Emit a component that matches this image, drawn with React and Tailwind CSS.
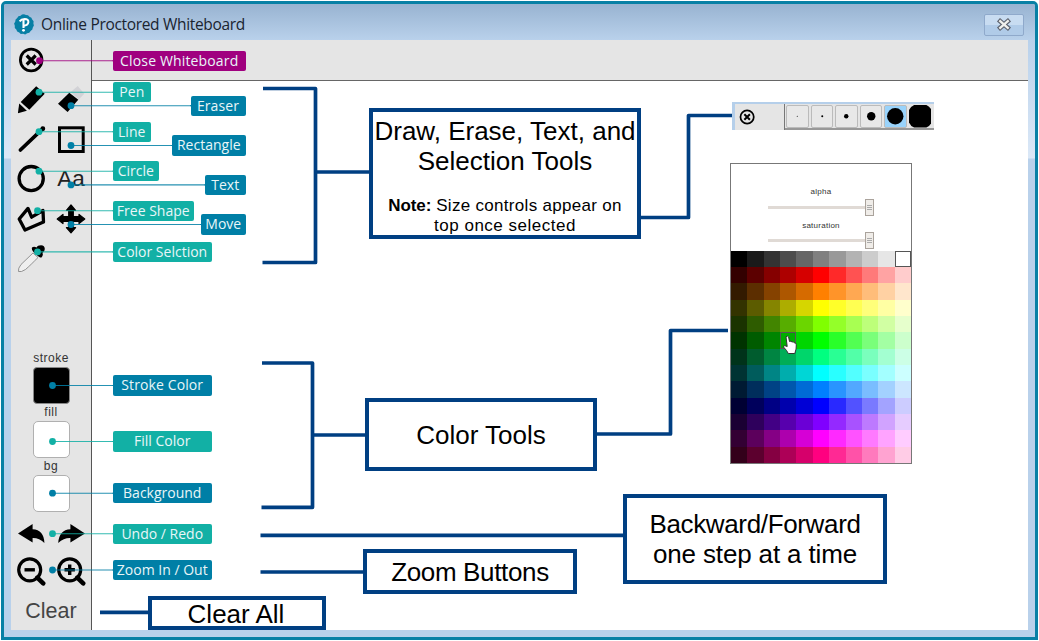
import React from "react";

const TEAL = "#12b0a5";
const BLUE = "#007fa6";
const PLUM = "#a0007f";

// Callout tags: label box, and the dot their leader line ends on.
const tags = [
  { text: "Close Whiteboard", x: 113, y: 50.5, w: 132.5, c: PLUM, dx: 39.5, ls: 0.15 },
  { text: "Pen", x: 113, y: 82, w: 37.5, c: TEAL, dx: 39, ls: 0.1 },
  { text: "Eraser", x: 190.5, y: 95.5, w: 55, c: BLUE, dx: 71, ls: 0.1 },
  { text: "Line", x: 113, y: 121.5, w: 37.5, c: TEAL, dx: 39, ls: 0.1 },
  { text: "Rectangle", x: 172, y: 135.3, w: 73.5, c: BLUE, dx: 71, ls: 0 },
  { text: "Circle", x: 113, y: 161, w: 45.5, c: TEAL, dx: 39, ls: 0 },
  { text: "Text", x: 205, y: 174.7, w: 40.5, c: BLUE, dx: 71, ls: 0 },
  { text: "Free Shape", x: 113, y: 200.5, w: 80.5, c: TEAL, dx: 37.5, ls: 0 },
  { text: "Move", x: 201, y: 214.3, w: 44.5, c: BLUE, dx: 71, ls: 0 },
  { text: "Color Selction", x: 113, y: 241.7, w: 98.5, c: TEAL, dx: 37.5, ls: 0 },
  { text: "Stroke Color", x: 113, y: 375.3, w: 98.5, c: BLUE, dx: 52.5, ls: 0.1 },
  { text: "Fill Color", x: 113, y: 431.3, w: 98.5, c: TEAL, dx: 52.5, ls: 0 },
  { text: "Background", x: 113, y: 483, w: 98.5, c: BLUE, dx: 52.5, ls: 0 },
  { text: "Undo / Redo", x: 113, y: 523.5, w: 98.5, c: TEAL, dx: 52.5, ls: 0 },
  { text: "Zoom In / Out", x: 113, y: 559.8, w: 98.5, c: BLUE, dx: 52.5, ls: 0 },
];

function CloseIcon({ className }) {
  return (
    <svg className={className} viewBox="0 0 26 26" fill="none" stroke="#000">
      <circle cx="13.2" cy="13" r="10.8" strokeWidth="2.8" />
      <path d="M8.7 8.5l9 9M17.7 8.5l-9 9" strokeWidth="3.2" />
    </svg>
  );
}

function Icon({ children }) {
  return (
    <svg className="h-[30px] w-[30px] shrink-0" viewBox="0 0 30 30" fill="#000">
      {children}
    </svg>
  );
}

function Swatch({ label, black }) {
  return (
    <div className="flex flex-col items-center">
      <span className="h-[17px] font-['Liberation_Sans'] text-[12px] leading-[17px] tracking-[0.5px] text-[#333]">{label}</span>
      <div
        className={
          black
            ? "h-[37px] w-[37px] rounded-[4px] border border-[#888] bg-black"
            : "h-[37px] w-[37px] rounded-[5px] border-[1.5px] border-[#b0b0b0] bg-white"
        }
      />
    </div>
  );
}

function Sidebar() {
  return (
    <aside className="flex w-[81px] shrink-0 flex-col border-r border-[#555] bg-[#e5e5e5] pt-[7px]">
      <div className="pl-[7px]">
        <CloseIcon className="h-[26px] w-[26px]" />
      </div>
      <div className="mt-[12px] grid grid-cols-[30px_30px] gap-x-[10px] gap-y-[9.7px] pl-[5px]">
        <Icon>
          <path d="M20.2 1.2L28.7 8.7L13.3 24.7L4.7 17Z" />
          <path d="M3.2 18.6L10.9 25.8L1.9 28.2Z" />
        </Icon>
        <Icon>
          <path d="M21.7 1L28.3 8.7L22.8 14.5L14.7 7Z" fill="#d2d2d6" />
          <path d="M13.3 7.7L22.3 14.8L11.6 27L2 18.8Z" />
        </Icon>
        <Icon>
          <path d="M4.4 25L26.8 3.6" stroke="#000" strokeWidth="3.7" strokeLinecap="round" />
          <circle cx="26.8" cy="3.7" r="2.4" />
        </Icon>
        <Icon>
          <rect x="3.5" y="2.8" width="23.7" height="23.7" fill="none" stroke="#000" strokeWidth="3" />
        </Icon>
        <Icon>
          <circle cx="15.2" cy="14.6" r="12.1" fill="none" stroke="#000" strokeWidth="3.3" />
        </Icon>
        <div className="flex h-[30px] w-[30px] items-center justify-center pb-[1px] font-['Liberation_Sans'] text-[22.5px] leading-none text-[#222]">Aa</div>
        <Icon>
          <path d="M3.2 15L12 4.4L15.6 13.2L27 6.5L27.5 18L9 26Z" fill="none" stroke="#000" strokeWidth="3.3" strokeLinejoin="round" />
        </Icon>
        <Icon>
          <path d="M15 1L19.6 6.3H17.3V12.7H23V10.4L28.8 15L23 19.6V17.3H17.3V23.7H19.6L15 28.8L10.4 23.7H12.7V17.3H7V19.6L1.2 15L7 10.4V12.7H12.7V6.3H10.4Z" stroke="#000" strokeWidth="1.2" strokeLinejoin="round" />
        </Icon>
        <Icon>
          <path d="M17 9L22 13.5C17 18.5 13 22.5 9.5 25.5Q5 28.5 2.5 27.5Q1.8 24.5 5 20.5Z" fill="#efefef" stroke="#888" strokeWidth="0.9" />
          <path d="M16 3.5Q18 1.8 20.6 3.6Q21.5 1.2 25 1.2Q28.8 1.5 28.8 5Q28.7 7.6 26.5 9Q27.5 11.5 25.5 13.6Q23.5 13.8 19.5 10Q15 6 16 3.5Z" />
        </Icon>
      </div>
      <div className="mt-[76.5px] flex flex-col">
        <Swatch label="stroke" black />
        <Swatch label="fill" />
        <Swatch label="bg" />
      </div>
      <div className="mt-[6.5px] flex gap-[10px] pl-[5px]">
        <Icon>
          <path d="M2 14.5L16.6 5V10.3Q28 11 28.4 24Q23 18.7 16.6 19V23.6Z" />
        </Icon>
        <Icon>
          <path d="M29 14.5L14.4 5V10.3Q3 11 2.2 24Q8 18.7 14.4 19V23.6Z" />
        </Icon>
      </div>
      <div className="mt-[7px] flex gap-[10px] pl-[5px]">
        {[false, true].map((plus) => (
          <Icon key={String(plus)}>
            <circle cx="13.7" cy="13.8" r="11" fill="none" stroke="#000" strokeWidth="3.2" />
            <path d={plus ? "M8.5 13.8H18.9M13.7 8.6V19" : "M8.5 13.8H18.9"} stroke="#000" strokeWidth="3.4" />
            <path d="M21.3 21.7L27.2 27.3" stroke="#000" strokeWidth="4.6" strokeLinecap="round" />
          </Icon>
        ))}
      </div>
      <div className="mt-[12px] text-center font-['Liberation_Sans'] text-[21.5px] leading-[26px] text-[#444]">Clear</div>
    </aside>
  );
}

function CalloutTags() {
  return (
    <>
      <svg className="absolute inset-0 h-full w-full">
        {tags.map((t) => (
          <g key={t.text}>
            <path d={`M${t.dx} ${t.y + 10.2}H${t.x}`} stroke={t.c} strokeWidth="1.1" opacity="0.85" />
            <circle cx={t.dx} cy={t.y + 10.2} r="3.4" fill={t.c} />
            <path d={`M${t.x - 0.5} ${t.y + 10.2}H${t.x + t.w / 2}`} stroke={t.c} strokeWidth="1.1" />
          </g>
        ))}
      </svg>
      {tags.map((t) => (
        <div
          key={t.text}
          className="absolute flex h-[20.4px] items-center justify-center whitespace-nowrap rounded-[2px] font-['Open_Sans'] text-[14px] leading-none text-[#e9f6f8]"
          style={{ left: t.x, top: t.y, width: t.w, backgroundColor: t.c, letterSpacing: t.ls }}
        >
          {t.text}
        </div>
      ))}
    </>
  );
}

const boxClass = "absolute flex flex-col items-center justify-center border-4 border-[#003f82] bg-white font-['Liberation_Sans'] text-[26px] leading-[30px] text-black whitespace-nowrap";

function Notes() {
  return (
    <>
      <svg className="absolute inset-0 h-full w-full" fill="none" stroke="#003f82" strokeWidth="3.7" strokeLinejoin="round">
        <path d="M263 88.5H315.5V262.5H262.5M315 172H371" />
        <path d="M640 217.5H688.5V115.5H732" />
        <path d="M262 363H312.5V507.3H261.5M312 435H366" />
        <path d="M596 434H670.5V330.5H728" />
        <path d="M260.5 535.4H624M260.5 572H364M100 612.3H149" />
      </svg>
      <div className={`${boxClass} left-[369px] top-[108px] h-[131px] w-[272px]`}>
        <span className="mt-[5px]">Draw, Erase, Text, and</span>
        <span>Selection Tools</span>
        <span className="mt-[20px] text-[17px] leading-[20px] tracking-[0.3px]"><b className="tracking-[-0.1px]">Note:</b> Size controls appear on</span>
        <span className="text-[17px] leading-[20px] tracking-[0.5px]">top once selected</span>
      </div>
      <div className={`${boxClass} left-[365px] top-[398px] h-[73px] w-[232px]`}>Color Tools</div>
      <div className={`${boxClass} left-[623px] top-[494px] h-[90px] w-[264px]`}>
        <span className="tracking-[-0.35px]">Backward/Forward</span>
        <span className="tracking-[-0.15px]">one step at a time</span>
      </div>
      <div className={`${boxClass} left-[363px] top-[549px] h-[45px] w-[214px] pt-px tracking-[-0.35px]`}>Zoom Buttons</div>
      <div className={`${boxClass} left-[148px] top-[596px] h-[34px] w-[178px] pr-[2px] pt-[2px]`}>Clear All</div>
    </>
  );
}

function SizeStrip() {
  return (
    <div className="absolute left-[732px] top-[102px] flex h-[28px] w-[202px] border-l-[3px] border-t-2 border-[#b5cfea] bg-[#e5e5e5]">
      <div className="flex w-[50px] items-center border-r border-[#777] pl-[4px]">
        <CloseIcon className="h-[16px] w-[16px]" />
      </div>
      <div className="flex flex-1 gap-[2px] border-b-2 border-[#999] pl-px pt-px">
        {[0.5, 1, 2.2, 4.2, 8.2].map((r, i) => (
          <svg
            key={r}
            viewBox="0 0 22.5 22.5"
            className={`h-[22.5px] w-[22.5px] shrink-0 rounded-[2px] border border-[#bbb] ${i === 4 ? "bg-[#99d3fb]" : "bg-[#e8e8e8]"}`}
          >
            <circle cx="11.25" cy="11.25" r={i === 4 ? 9 : r * 1.1} fill="#000" />
          </svg>
        ))}
        <svg viewBox="0 0 22 22" className="h-[22.5px] w-[22.5px] shrink-0">
          <path d="M5 0H17Q20.5 1.5 22 5V17Q20.5 20.5 17 22H5Q1.5 20.5 0 17V5Q1.5 1.5 5 0Z" />
        </svg>
      </div>
    </div>
  );
}

function Slider({ label }) {
  return (
    <div className="flex h-[33.5px] w-[106px] shrink-0 flex-col items-center">
      <span className="font-['Liberation_Sans'] text-[8px] leading-[10px] tracking-[0.25px] text-[#333]">{label}</span>
      <div className="mt-[1.5px] flex h-[17px] w-full items-center">
        <div className="h-[3px] flex-1 bg-[#e0dad5]" />
        <div className="flex h-[17px] w-[9px] flex-col items-center justify-center gap-px border border-[#aaa39c] bg-[#f0ede9]">
          <i className="h-px w-[5px] bg-[#aaa]" />
          <i className="h-px w-[5px] bg-[#aaa]" />
          <i className="h-px w-[5px] bg-[#aaa]" />
        </div>
      </div>
    </div>
  );
}

function Palette() {
  const cells = [];
  for (let row = 0; row < 13; row++) {
    for (let col = 0; col < 11; col++) {
      cells.push(row === 0 ? `hsl(0 0% ${col * 10}%)` : `hsl(${(row - 1) * 30} 100% ${10 + col * 8}%)`);
    }
  }
  return (
    <div className="absolute left-[730px] top-[163px] flex h-[301px] w-[182px] flex-col border border-[#777] bg-white">
      <div className="flex h-[86.5px] flex-col items-end pr-[37px] pt-[23px]">
        <Slider label="alpha" />
        <Slider label="saturation" />
      </div>
      <div className="grid flex-1 grid-cols-11 grid-rows-[repeat(13,1fr)]">
        {cells.map((c, i) => (
          <div
            key={i}
            className={i === 10 || i === 58 ? "border border-[#555]" : ""}
            style={{ backgroundColor: c }}
          />
        ))}
      </div>
      <svg className="absolute left-[51px] top-[171px] h-[20px] w-[16px]" viewBox="0 0 16 20">
        <path
          d="M4 1.8Q5.4.2 6.6 2L7.5 6.5Q9 5.6 10 7Q11.4 6.2 12.2 7.8Q14.2 7.4 14.3 9.8Q14.6 14 12.8 18.5H6.3Q5 15.5 1.5 12Q1 9.8 5.2 11.5Z"
          fill="#fff"
          stroke="#333"
          strokeWidth="1"
          strokeLinejoin="round"
        />
      </svg>
    </div>
  );
}

function TitleBar() {
  return (
    <header className="flex h-[36px] shrink-0 items-center bg-linear-to-b from-[#98b3d1] to-[#b9d1eb] pl-[10px] pr-[10.5px] pt-[5px]">
      <svg className="h-[21px] w-[20px]" viewBox="0 0 20 21">
        <path d="M10 .3L12 1L14 1.2L15.5 2.7L17.4 3.7L18.2 5.6L19.6 7.3L19.4 9.4L19.9 11.5L18.8 13.4L18.3 15.6L16.6 16.9L15.3 18.7L13.2 19.2L11.2 20.4L9.1 19.8L6.8 19.9L5.2 18.4L3.2 17.5L2.3 15.5L.8 13.9L.8 11.7L.1 9.6L1.2 7.7L1.6 5.5L3.2 4.1L4.4 2.2L6.5 1.7L8 .5Z" fill="#077fa5" />
        <path d="M5.6 7.4Q7.4 5 10.7 4.9Q14.5 5 14.4 8.1Q14 11.3 9.4 11.8" fill="none" stroke="#fff" strokeWidth="2" />
        <path d="M9.5 6V14" stroke="#fff" strokeWidth="2.1" />
        <circle cx="9.5" cy="16.3" r="1.4" fill="#fff" />
      </svg>
      <h1 className="ml-[7px] flex-1 whitespace-nowrap font-['Open_Sans'] text-[15.5px] font-normal leading-none tracking-[-0.32px] text-[#1a2430]">Online Proctored Whiteboard</h1>
      <button className="flex h-[22px] w-[40px] items-center justify-center rounded-[2px] border border-[#8fa9cb] bg-linear-to-b from-[#c8dcf1] from-50% to-[#b0cbe8] to-50%">
        <svg className="h-[13px] w-[16px]" viewBox="0 0 16 13" fill="none" strokeLinecap="square">
          <path d="M4.2 3.2L11.8 9.8M11.8 3.2L4.2 9.8" stroke="#5e6470" strokeWidth="4.6" />
          <path d="M4.2 3.2L11.8 9.8M11.8 3.2L4.2 9.8" stroke="#f0f0ec" strokeWidth="2.3" />
        </svg>
      </button>
    </header>
  );
}

export default function App() {
  return (
    <div className="relative h-[641px] w-[1039px] overflow-hidden bg-white p-px">
      <div className="flex h-[639px] w-[1036.5px] flex-col overflow-hidden rounded-t-[5px] border-[3px] border-[#0880a5] bg-[#b9d1eb]">
        <TitleBar />
        <div className="flex flex-1 bg-linear-to-b from-[#b9d1eb] via-[#dbe8f7] via-[118px] to-[#b9d1eb] to-[119px] pb-[7px] pl-[7px] pr-[6.5px]">
          <Sidebar />
          <main className="flex flex-1 flex-col bg-white">
            <div className="h-[41px] border-b border-[#666] bg-[#e5e5e5]" />
          </main>
        </div>
      </div>
      <CalloutTags />
      <Notes />
      <SizeStrip />
      <Palette />
    </div>
  );
}
